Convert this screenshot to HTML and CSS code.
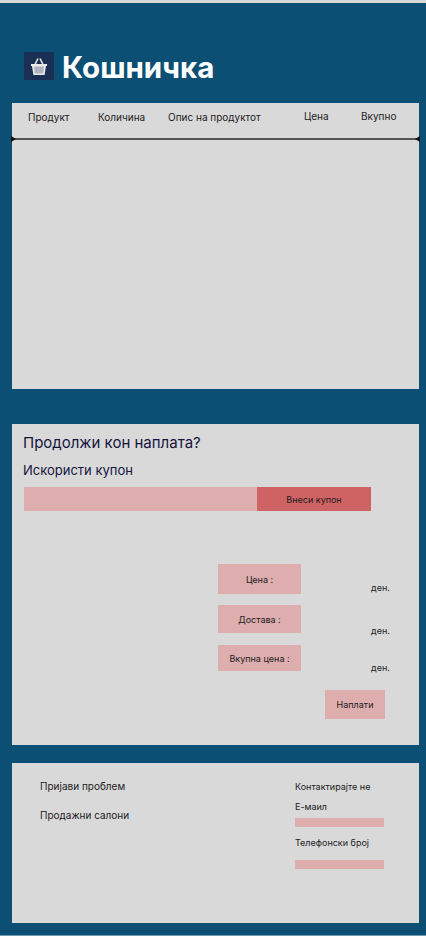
FILE: index.html
```html
<!DOCTYPE html>
<html lang="mk">
<head>
    <meta charset="UTF-8">
    <title>Кошничка</title>
    <link rel="stylesheet" href="styles.css">
</head>
<body>
    <div class="page">
        <header class="title">
            <span class="title-icon">
                <svg width="18" height="20" viewBox="0 0 18 20">
                    <path d="M5 8.5 L8 2.5 M13 8.5 L10 2.5" fill="none" stroke="#e4e4e4" stroke-width="1.6"/>
                    <path d="M1 8 H17 V10 H16 L14.6 19 H3.4 L2 10 H1 Z" fill="#e9e9e9"/>
                    <path d="M4 10.5 H14 L13.1 17.4 H4.9 Z" fill="#aeb3bf"/>
                </svg>
            </span>
            <h1>Кошничка</h1>
        </header>

        <section class="panel cart">
            <div class="cart-head">
                <span>Продукт</span>
                <span>Количина</span>
                <span>Опис на продуктот</span>
                <span class="up">Цена</span>
                <span class="up">Вкупно</span>
            </div>
            <div class="divider"></div>
        </section>

        <section class="panel checkout">
            <h2>Продолжи кон наплата?</h2>
            <h3>Искористи купон</h3>
            <form class="coupon">
                <input class="coupon-input" type="text">
                <button class="coupon-btn" type="button">Внеси купон</button>
            </form>
            <div class="summary">
                <div class="summary-row row-price">
                    <span class="summary-label">Цена :</span>
                    <span class="summary-value">ден.</span>
                </div>
                <div class="summary-row row-delivery">
                    <span class="summary-label">Достава :</span>
                    <span class="summary-value">ден.</span>
                </div>
                <div class="summary-row row-total">
                    <span class="summary-label">Вкупна цена :</span>
                    <span class="summary-value">ден.</span>
                </div>
            </div>
            <button class="pay-btn" type="button">Наплати</button>
        </section>

        <footer class="panel footer">
            <div class="footer-links">
                <a>Пријави проблем</a>
                <a>Продажни салони</a>
            </div>
            <div class="footer-contact">
                <p class="contact-title">Контактирајте не</p>
                <label class="contact-email">Е-маил</label>
                <div class="contact-bar"></div>
                <label class="contact-phone">Телефонски број</label>
                <div class="contact-bar"></div>
            </div>
        </footer>
    </div>
</body>
</html>
```

FILE: styles.css
```css
* {
    box-sizing: border-box;
}

body {
    margin: 0;
    background: #0b4f75;
    font-family: Inter, "Noto Sans", sans-serif;
    color: #1c1c22;
}

.page {
    height: 936px;
    border-top: 3px solid #d9d9d9;
    border-bottom: 1px solid #6f9bb5;
    padding: 0 7px 0 12px;
    overflow: hidden;
}

.panel {
    background: #d9d9d9;
}

/* title */
.title {
    display: flex;
    align-items: center;
    height: 100px;
    padding: 27px 0 0 12px;
}

.title-icon {
    display: flex;
    align-items: center;
    justify-content: center;
    width: 30px;
    height: 28px;
    margin-top: -2px;
    margin-right: 8px;
    background: #1b2f55;
}

.title h1 {
    margin: 0;
    font-size: 29.5px;
    font-weight: 700;
    color: #fff;
}

/* cart */
.cart {
    height: 286px;
}

.cart-head {
    display: grid;
    grid-template-columns: 70px 70px 136px 57px auto;
    height: 35px;
    padding: 7px 0 0 16px;
    font-size: 10px;
    line-height: 14px;
}

.up {
    margin-top: -1px;
}

.divider {
    position: relative;
    height: 2px;
    background: #555;
}

.divider::before,
.divider::after {
    content: "";
    position: absolute;
    top: -2px;
    border-top: 3px solid transparent;
    border-bottom: 3px solid transparent;
}

.divider::before {
    left: -1px;
    border-left: 5px solid #111;
}

.divider::after {
    right: -1px;
    border-right: 5px solid #111;
}

/* checkout */
.checkout {
    height: 321px;
    margin-top: 35px;
    padding: 9px 12px 0 11px;
}

.checkout h2 {
    margin: 0;
    font-size: 15px;
    font-weight: 400;
    line-height: 20px;
    color: #14143c;
}

.checkout h3 {
    margin: 7px 0 0;
    font-size: 13px;
    font-weight: 400;
    line-height: 20px;
    color: #14143c;
}

.coupon {
    display: flex;
    margin: 7px 0 0 1px;
}

.coupon-input {
    width: 233px;
    height: 24px;
    border: 0;
    background: #deadad;
}

.coupon-btn {
    width: 114px;
    height: 24px;
    border: 0;
    background: #cf6363;
    font-family: inherit;
    font-size: 9px;
    color: #1c1c22;
}

.summary {
    margin: 53px 0 0 195px;
}

.summary-row {
    display: flex;
}

.summary-label {
    display: flex;
    align-items: center;
    justify-content: center;
    width: 83px;
    background: #deadad;
    font-size: 9px;
}

.summary-value {
    margin-left: 70px;
    font-size: 9px;
    line-height: 12px;
    align-self: flex-end;
}

.row-price .summary-label {
    height: 30px;
}

.row-delivery {
    margin-top: 11px;
}

.row-delivery .summary-label {
    height: 28px;
}

.row-delivery .summary-value {
    margin-bottom: -4px;
}

.row-total {
    margin-top: 12px;
}

.row-total .summary-label {
    height: 26px;
}

.row-total .summary-value {
    margin-bottom: -3px;
}

.pay-btn {
    display: block;
    width: 60px;
    height: 29px;
    margin: 19px 0 0 302px;
    border: 0;
    background: #deadad;
    font-family: inherit;
    font-size: 9px;
    color: #1c1c22;
}

/* footer */
.footer {
    display: flex;
    justify-content: space-between;
    height: 160px;
    margin-top: 18px;
    padding: 16px 35px 0 28px;
    font-size: 10px;
}

.footer-links a {
    display: block;
    margin-bottom: 15px;
    line-height: 14px;
}

.footer-contact {
    width: 89px;
    padding-top: 1px;
    font-size: 9px;
}

.contact-title {
    margin: 0;
    line-height: 14px;
    white-space: nowrap;
}

.footer-contact label {
    display: block;
    line-height: 12px;
    white-space: nowrap;
}

.contact-email {
    margin-top: 7px;
}

.contact-bar {
    height: 9px;
    background: #deadad;
}

.contact-email + .contact-bar {
    margin-top: 5px;
}

.contact-phone {
    margin: 10px 0 11px;
}
```
